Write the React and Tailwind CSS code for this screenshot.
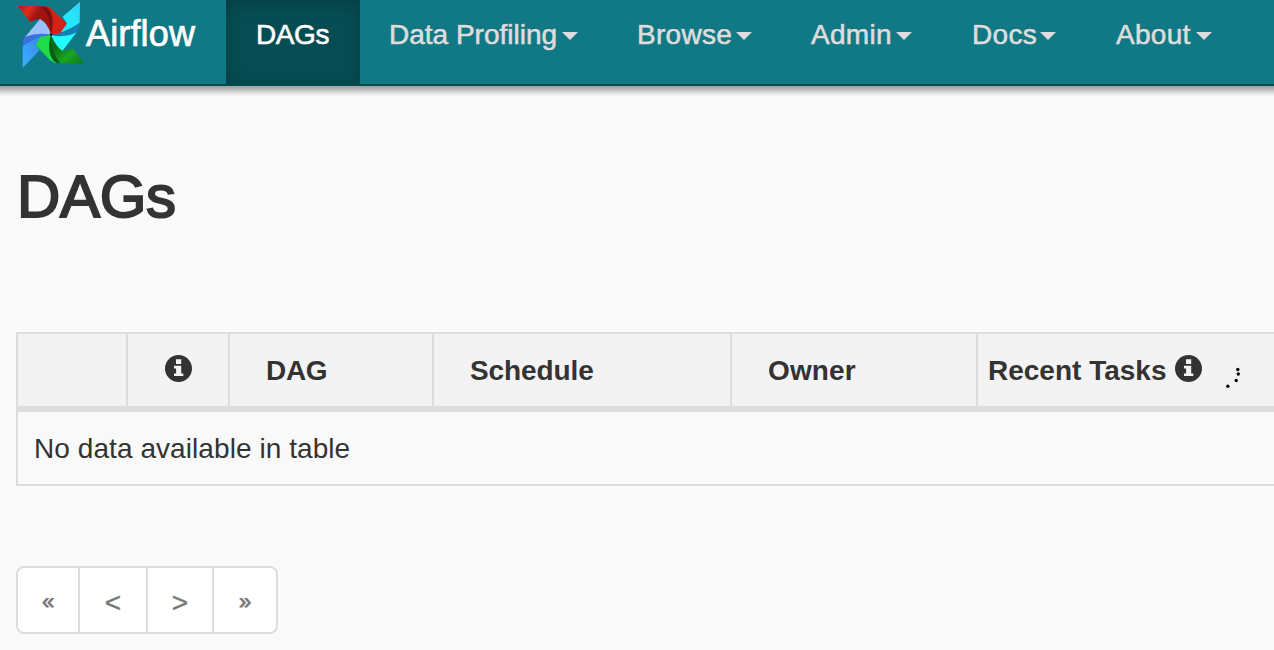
const menus = [
  { label: 'Data Profiling', box: 'ml-[29px] w-[189px]' },
  { label: 'Browse', box: 'ml-[59px] w-[115px] tracking-[0.3px]' },
  { label: 'Admin', box: 'ml-[59px] w-[101px] tracking-[0.3px]' },
  { label: 'Docs', box: 'ml-[60px] w-[84px] tracking-[0.3px]' },
  { label: 'About', box: 'ml-[60px] w-[96px] tracking-[0.3px]' },
];

function Logo() {
  return (
    <svg viewBox="48 0 210 210" className="ml-4 h-[70px] w-[70px] shrink-0">
      <defs>
        <linearGradient id="red" x1="0" y1="0" x2="1" y2="0.5">
          <stop offset="0" stopColor="#a81a12" />
          <stop offset="0.3" stopColor="#e02d20" />
          <stop offset="0.55" stopColor="#a01510" />
        </linearGradient>
        <linearGradient id="cyan" x1="1" y1="0" x2="0.3" y2="1">
          <stop offset="0" stopColor="#35d0f5" />
          <stop offset="0.6" stopColor="#24e6ff" />
        </linearGradient>
        <linearGradient id="green" x1="0" y1="0" x2="1" y2="1">
          <stop offset="0.3" stopColor="#0c6d16" />
          <stop offset="0.65" stopColor="#1aa51e" />
          <stop offset="1" stopColor="#0b7516" />
        </linearGradient>
        <linearGradient id="sky" x1="1" y1="0" x2="0" y2="1">
          <stop offset="0" stopColor="#3b86f0" />
          <stop offset="1" stopColor="#39b2ff" />
        </linearGradient>
      </defs>
      <path d="M53 18L136 19Q152 22 158 48Q162 75 153 104Q141 66 120 57Q105 58 90 66Z" fill="url(#red)" />
      <path d="M120 20Q150 20 158 52Q161 82 153 104Q154 42 120 20Z" fill="#7c0f0c" />
      <path d="M136 19Q150 21 162 34L201 71L179 105L153 104Q162 70 155 43Q150 26 136 19Z" fill="#d42218" />
      <path d="M240 5L239 68Q222 82 181 98L201 71L188 50Z" fill="url(#cyan)" />
      <path d="M239 68Q240 88 228 98Q196 113 153 105Q210 96 239 68Z" fill="#117fb5" />
      <path d="M153 105Q193 115 230 97L187 153Q170 142 153 105Z" fill="#22fbff" />
      <path d="M252 190L175 190Q153 183 150 150Q148 123 153 104Q163 137 187 153Q203 153 217 145Z" fill="url(#green)" />
      <path d="M153 104Q150 150 181 190Q157 190 143 170Q142 128 153 104Z" fill="#0b5d18" />
      <path d="M153 104Q143 132 150 161Q156 182 171 190Q157 189 143 173L107 136L119 109Z" fill="#20da48" />
      <path d="M68 203L68 137Q101 119 121 109L107 136L119 151Z" fill="url(#sky)" />
      <path d="M153 104Q94 112 68 140Q67 116 79 106Q108 97 153 104Z" fill="#3e70e2" />
      <path d="M153 104Q113 97 76 110L120 57Q144 71 153 104Z" fill="#9cc0fb" />
      <circle cx="153" cy="104" r="4" fill="#14202c" />
    </svg>
  );
}

function InfoIcon() {
  return (
    <svg viewBox="0 0 27 27" className="h-[27px] w-[27px] shrink-0">
      <circle cx="13.5" cy="13.5" r="13.5" fill="#333" />
      <path d="M11 4.2h5.2v4.7H11zM9 10.8h7.2v7.6h2.1v2.7H9v-2.7h2.1v-4.9H9z" fill="#f3f3f3" />
    </svg>
  );
}

export default function App() {
  return (
    <div className="h-[650px] w-[1274px] overflow-hidden bg-[#fafafa] font-['Liberation_Sans',Arial,sans-serif] text-[28px] leading-8 text-[#333]">
      <nav className="-mx-3 flex h-[86px] border-b-2 border-[#064a50] bg-[#107985] px-3 shadow-[0_5px_6px_0_rgba(0,0,0,0.37)] [text-shadow:0_-1px_0_rgba(0,0,0,0.25)]">
        <div className="flex w-[226px] shrink-0">
          <Logo />
          <span className="mt-[15px] text-[36px] leading-[38px] tracking-[0.15px] text-white [-webkit-text-stroke:0.7px_white]">Airflow</span>
        </div>
        <div className="w-[134px] shrink-0 bg-[#064d53] pt-[19px] pl-[30px] tracking-[-0.4px] text-white shadow-[inset_0_3px_16px_rgba(0,0,0,0.2)] [-webkit-text-stroke:0.6px_white]">DAGs</div>
        {menus.map((m) => (
          <div key={m.label} className={`flex shrink-0 justify-between pt-[19px] text-[#ddd] ${m.box}`}>
            <span className="whitespace-nowrap [-webkit-text-stroke:0.6px_#ddd]">{m.label}</span>
            <svg viewBox="0 0 16 8" className="mt-[13px] h-2 w-4 shrink-0">
              <path d="M0 0H16L8 8Z" fill="#ddd" />
            </svg>
          </div>
        ))}
      </nav>

      <main className="pl-4">
        <h1 className="pt-[77px] pl-px text-[60px] leading-[68px] font-normal tracking-[-0.3px] [-webkit-text-stroke:2px_#333]">DAGs</h1>

        <div className="mt-[101px] w-[1300px] border-2 border-[#ddd]">
          <div className="grid h-[78px] grid-cols-[110px_102px_204px_298px_246px_1fr] border-b-[6px] border-[#ddd] bg-[#f3f3f3] font-bold">
            <div className="border-r-2 border-[#ddd]" />
            <div className="flex border-r-2 border-[#ddd] pt-[21px] pl-[36.5px]">
              <InfoIcon />
            </div>
            <div className="border-r-2 border-[#ddd] pt-[21px] pl-[36px] tracking-[-0.3px]">DAG</div>
            <div className="border-r-2 border-[#ddd] pt-[21px] pl-[36px] tracking-[-0.1px]">Schedule</div>
            <div className="border-r-2 border-[#ddd] pt-[21px] pl-[36px] tracking-[0.1px]">Owner</div>
            <div className="flex pt-[21px] pl-[10px]">
              <span className="w-[187px] whitespace-nowrap">Recent Tasks</span>
              <InfoIcon />
              <svg viewBox="0 0 18 24" className="mt-[11px] ml-[23px] h-6 w-[18px]">
                <circle cx="12.8" cy="3.5" r="1.7" />
                <circle cx="13.3" cy="8" r="1.7" />
                <circle cx="11.2" cy="14.5" r="1.7" />
                <circle cx="2.8" cy="20.2" r="1.7" />
              </svg>
            </div>
          </div>
          <div className="h-[72px] bg-[#f9f9f9] pt-[21px] pl-4 tracking-[0.07px]">No data available in table</div>
        </div>

        <div className="mt-20 flex h-[68px] w-[262px] overflow-hidden rounded-lg border-2 border-[#ddd] bg-white text-center text-[#777]">
          <div className="w-[62px] border-r-2 border-[#ddd] pt-[18px] text-[22px] [-webkit-text-stroke:0.8px_#777]">«</div>
          <div className="w-[68px] border-r-2 border-[#ddd] pt-[19px] [-webkit-text-stroke:0.4px_#777]">&lt;</div>
          <div className="w-[66px] border-r-2 border-[#ddd] pt-[19px] [-webkit-text-stroke:0.4px_#777]">&gt;</div>
          <div className="w-[62px] pt-[18px] text-[22px] [-webkit-text-stroke:0.8px_#777]">»</div>
        </div>
      </main>
    </div>
  );
}
